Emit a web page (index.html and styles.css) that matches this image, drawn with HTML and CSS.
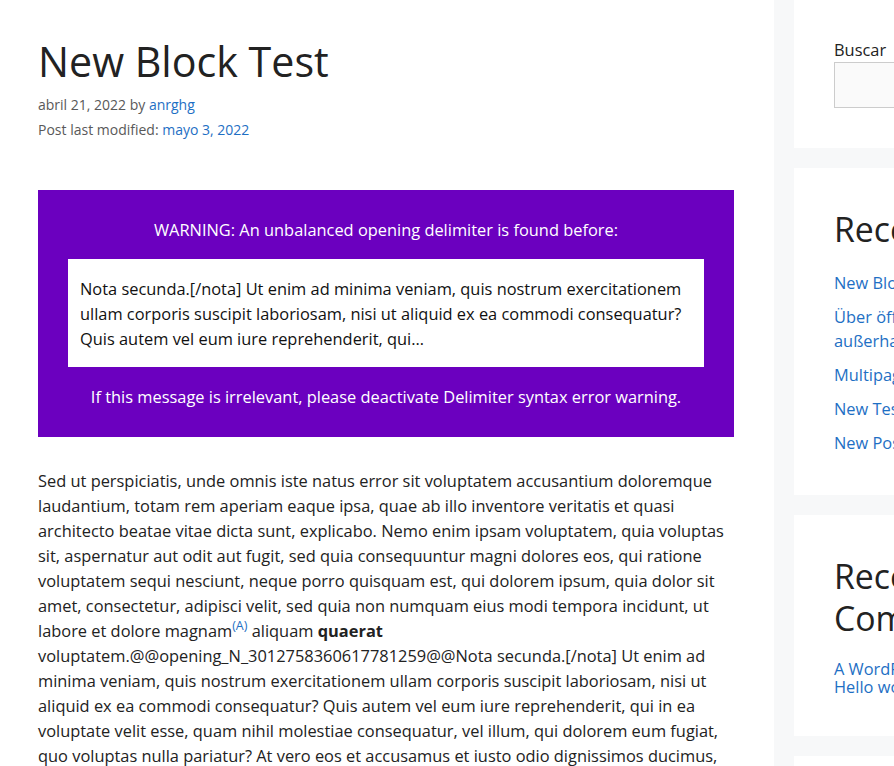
FILE: index.html
```html
<!DOCTYPE html>
<html lang="es">
<head>
<meta charset="utf-8">
<title>New Block Test</title>
<link rel="stylesheet" href="styles.css">
</head>
<body>
<div class="site">
  <main class="content">
    <article class="post">
      <header class="entry-header">
        <h1 class="entry-title">New Block Test</h1>
        <div class="entry-meta">abril 21, 2022 by <a href="#">anrghg</a></div>
        <div class="entry-meta">Post last modified: <a href="#">mayo 3, 2022</a></div>
      </header>
      <div class="entry-content">
        <div class="warning">
          <p class="warning-text">WARNING: An unbalanced opening delimiter is found before:</p>
          <div class="warning-quote">Nota secunda.[/nota] Ut enim ad minima veniam, quis nostrum exercitationem ullam corporis suscipit laboriosam, nisi ut aliquid ex ea commodi consequatur? Quis autem vel eum iure reprehenderit, qui…</div>
          <p class="warning-text warning-last">If this message is irrelevant, please deactivate Delimiter syntax error warning.</p>
        </div>
        <p class="body-text">Sed ut perspiciatis, unde omnis iste natus error sit voluptatem accusantium doloremque laudantium, totam rem aperiam eaque ipsa, quae ab illo inventore veritatis et quasi architecto beatae vitae dicta sunt, explicabo. Nemo enim ipsam voluptatem, quia voluptas sit, aspernatur aut odit aut fugit, sed quia consequuntur magni dolores eos, qui ratione voluptatem sequi nesciunt, neque porro quisquam est, qui dolorem ipsum, quia dolor sit amet, consectetur, adipisci velit, sed quia non numquam eius modi tempora incidunt, ut labore et dolore magnam<sup class="ref"><a href="#">(A)</a></sup> aliquam <strong>quaerat</strong> voluptatem.@@opening_N_3012758360617781259@@Nota secunda.[/nota] Ut enim ad minima veniam, quis nostrum exercitationem ullam corporis suscipit laboriosam, nisi ut aliquid ex ea commodi consequatur? Quis autem vel eum iure reprehenderit, qui in ea voluptate velit esse, quam nihil molestiae consequatur, vel illum, qui dolorem eum fugiat, quo voluptas nulla pariatur? At vero eos et accusamus et iusto odio dignissimos ducimus, qui blanditiis praesentium voluptatum deleniti atque corrupti, quos dolores et quas molestias excepturi sint, obcaecati cupiditate non provident.</p>
      </div>
    </article>
  </main>
  <aside class="sidebar">
    <section class="widget widget-search">
      <label class="search-label" for="s">Buscar</label>
      <input class="search-input" id="s" type="search">
    </section>
    <section class="widget">
      <h2 class="widget-title">Recent Posts</h2>
      <ul class="post-list">
        <li><a href="#">New Block Test</a></li>
        <li><a href="#">Über öffentliche Dienste außerhalb der Geschäftszeiten</a></li>
        <li><a href="#">Multipage Test</a></li>
        <li><a href="#">New Test Post</a></li>
        <li><a href="#">New Post</a></li>
      </ul>
    </section>
    <section class="widget">
      <h2 class="widget-title">Recent Comments</h2>
      <ul class="comment-list">
        <li><a href="#">A WordPress Commenter</a> on <a href="#">Hello world!</a></li>
      </ul>
    </section>
    <section class="widget">
      <h2 class="widget-title">Archives</h2>
    </section>
  </aside>
</div>
</body>
</html>
```
FILE: styles.css
```css
html {
  overflow: hidden;
}
body {
  margin: 0;
  background: #f7f8f9;
  color: #222222;
  font-family: "Open Sans", "Noto Sans", sans-serif;
  font-size: 16.4px;
  line-height: 25px;
}
a {
  color: #1e6fc4;
  text-decoration: none;
}
.site {
  display: flex;
  align-items: flex-start;
  width: 1124px;
}
.content {
  width: 774px;
  flex: 0 0 774px;
  box-sizing: border-box;
  background: #ffffff;
  padding: 37px 40px 40px 38px;
  min-height: 900px;
}
.entry-title {
  margin: 0;
  font-size: 41.2px;
  line-height: 49.4px;
  font-weight: 400;
  color: #222222;
}
.entry-meta {
  font-size: 14px;
  line-height: 25px;
  color: #595959;
}
.entry-title + .entry-meta {
  margin-top: 6px;
}
.entry-content {
  margin-top: 48px;
}
.warning {
  background: #6b00bf;
  color: #ffffff;
  padding: 27px 30px 28px;
}
.warning-text {
  margin: 0 0 17px;
  text-align: center;
}
.warning-last {
  margin: 17px 0 0;
}
.warning-quote {
  background: #ffffff;
  color: #111111;
  padding: 17px 12px 16px;
}
.body-text {
  margin: 31px 0 0;
}
.ref {
  font-size: 12.5px;
  line-height: 0;
  vertical-align: 7px;
}
.sidebar {
  width: 330px;
  flex: 0 0 330px;
  margin-left: 20px;
}
.widget {
  background: #ffffff;
  padding: 40px;
  margin-bottom: 20px;
}
.widget-search {
  padding-top: 39px;
}
.search-label {
  display: block;
  line-height: 22px;
  margin-bottom: 1px;
}
.search-input {
  display: block;
  box-sizing: border-box;
  width: 100%;
  height: 46px;
  margin: 0;
  border: 1px solid #cccccc;
  background: #fafafa;
  font: inherit;
}
.widget-title {
  margin: 0 0 21px;
  font-size: 33.8px;
  line-height: 42px;
  font-weight: 400;
  color: #222222;
}
.post-list,
.comment-list {
  list-style: none;
  margin: 0;
  padding: 0;
}
.post-list li {
  line-height: 24px;
  margin-bottom: 10px;
}
.post-list li:last-child {
  margin-bottom: 0;
}
.comment-list li {
  line-height: 18px;
}
```
